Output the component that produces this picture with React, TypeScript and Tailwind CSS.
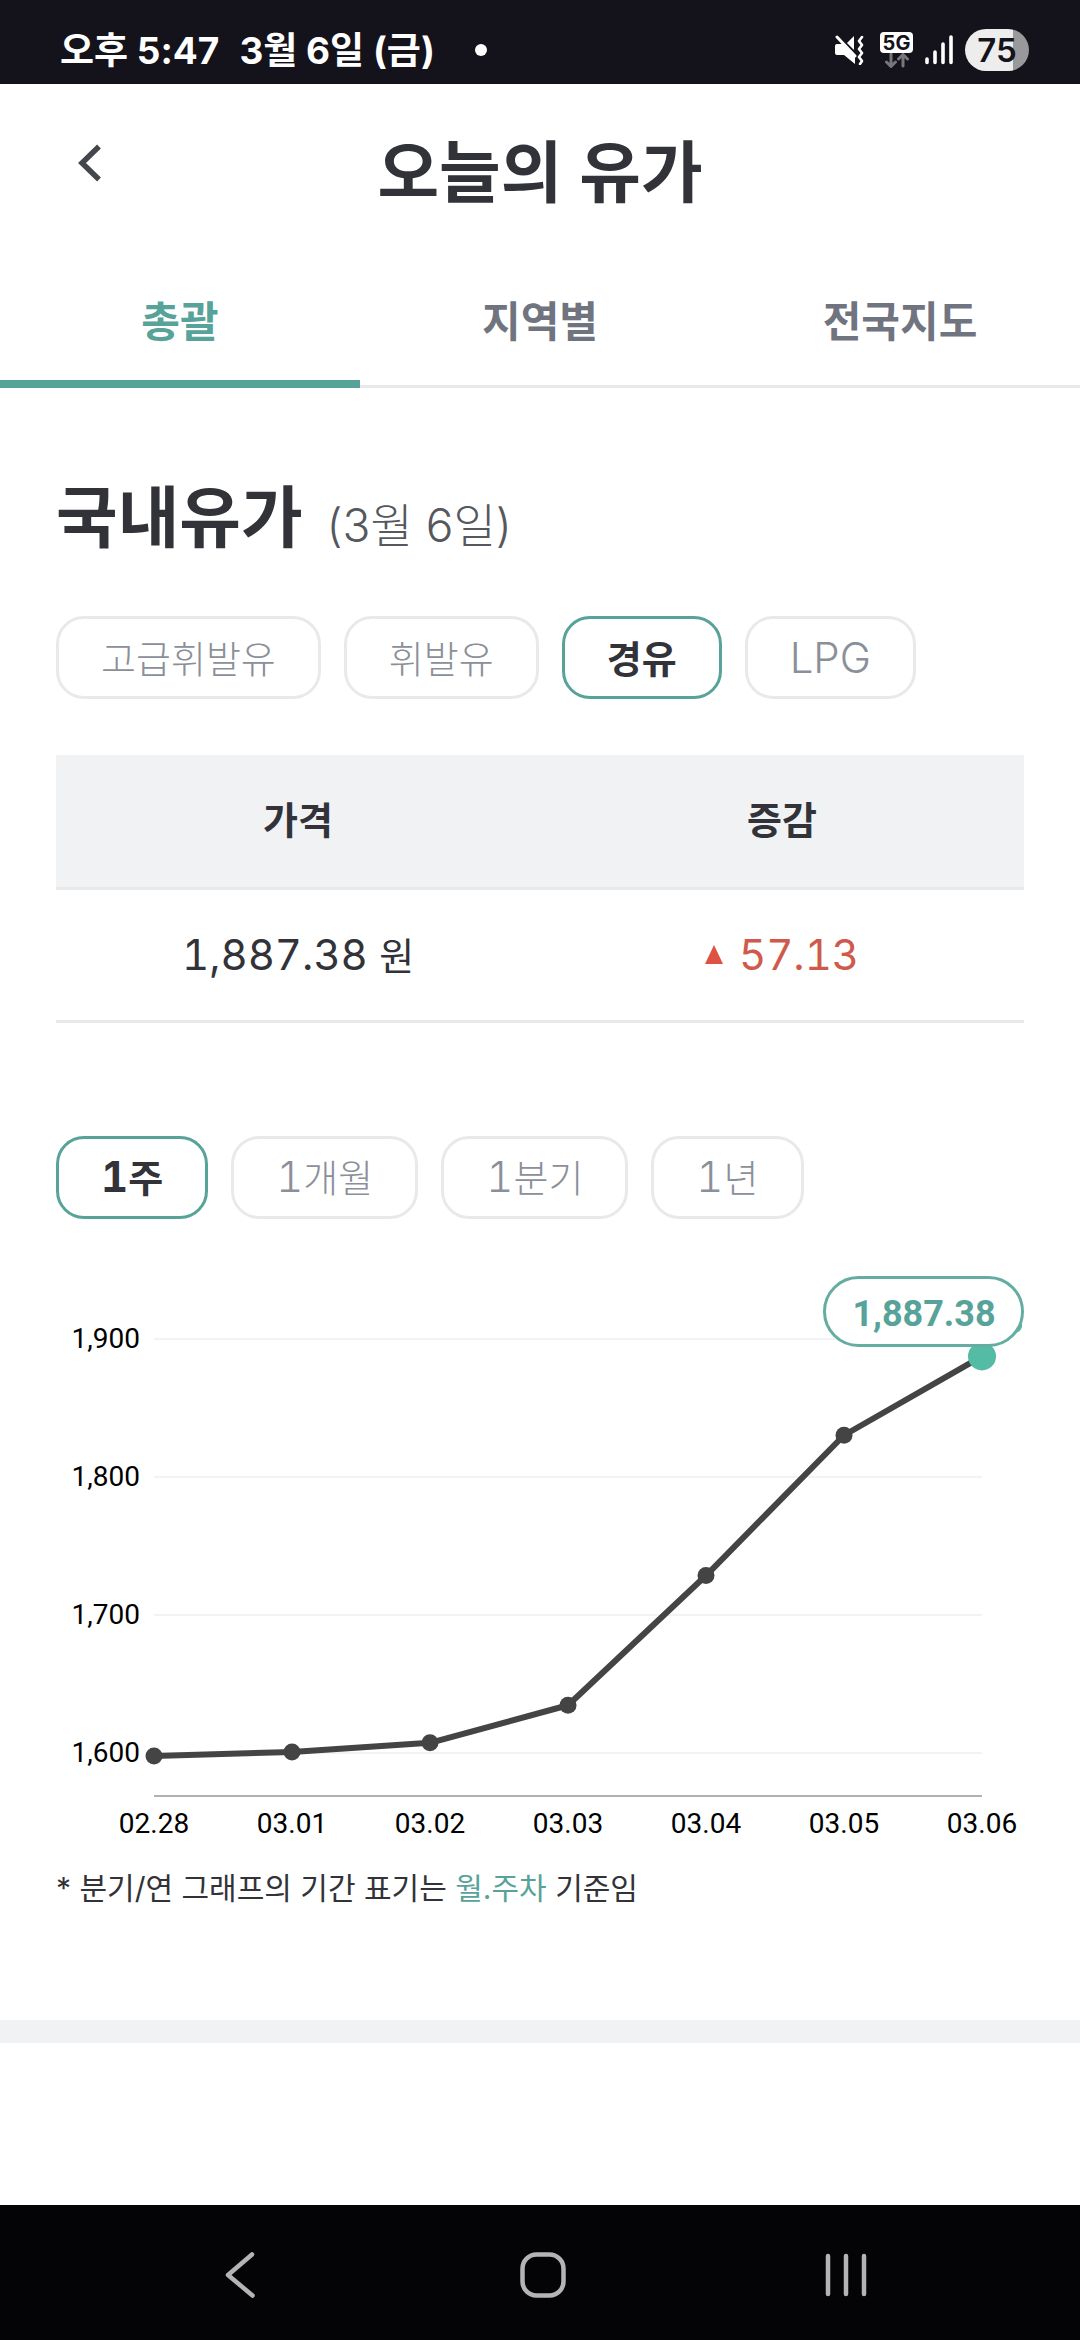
import { useState } from "react";

const FUELS = ["고급휘발유", "휘발유", "경유", "LPG"];
const PERIODS = ["1주", "1개월", "1분기", "1년"];
const TABS = ["총괄", "지역별", "전국지도"];

const PRICES = [
  { date: "02.28", price: 1597.9 },
  { date: "03.01", price: 1600.8 },
  { date: "03.02", price: 1607.4 },
  { date: "03.03", price: 1634.6 },
  { date: "03.04", price: 1728.6 },
  { date: "03.05", price: 1830.25 },
  { date: "03.06", price: 1887.38 },
];

function StatusBar() {
  return (
    <div className="flex h-[84px] items-center justify-between bg-[#14121a] pt-4 pr-[51px] pl-[60px] text-white">
      <div className="flex items-center text-[37px] leading-none font-bold">
        <span>오후 5:47</span>
        <span className="ml-5">3월 6일 (금)</span>
        <span className="ml-10 size-3 rounded-full bg-white" />
      </div>
      <div className="flex items-center gap-3">
        {/* muted + vibrate */}
        <svg className="mr-1" width="30" height="30" viewBox="0 0 30 30" fill="none">
          <path d="M1 11q0-2 2-2h6l12 12v8L10 20H3q-2 0-2-2z" fill="#fff" />
          <path d="M13 8l7-7v14z" fill="#fff" />
          <path d="M3 2l18 19" stroke="#fff" strokeWidth="3" strokeLinecap="round" />
          <path d="M28 2l-3 4 3 4-3 4 3 4-3 4 3 4-2 3" stroke="#fff" strokeWidth="2.6" strokeLinecap="round" strokeLinejoin="round" />
        </svg>
        <div className="flex w-[33px] flex-col items-center">
          <span className="flex h-[21px] w-full items-center justify-center rounded-[4px] bg-white text-[20px] leading-none font-bold text-[#14121a]">
            5G
          </span>
          <svg width="24" height="15" viewBox="0 0 24 15" fill="none" stroke="#77767b" strokeWidth="3" strokeLinecap="round" strokeLinejoin="round">
            <path d="M6 1v12M1.500 9L6 13.500L10.500 9M18 13V2M13.500 6L18 1.500L22.500 6" />
          </svg>
        </div>
        <svg width="28" height="30" viewBox="0 0 28 30" fill="none" stroke="#fff" strokeWidth="3.600" strokeLinecap="round">
          <path d="M2 24v3.500M10 17v10.500M18 9v18.500M26 2v25.500" />
        </svg>
        <div className="flex h-[42px] w-16 items-center justify-center rounded-full bg-linear-to-r from-[#ededee] from-75% to-[#99989b] to-75% text-[33px] leading-none font-semibold text-[#14121a]">
          75
        </div>
      </div>
    </div>
  );
}

type ChipsProps = { name: string; items: string[]; value: string; onChange: (v: string) => void };

function Chips({ name, items, value, onChange }: ChipsProps) {
  return (
    <div role="group" aria-label={name} className="flex flex-wrap gap-[23px]">
      {items.map((item) => {
        // latin letters and digits run a little larger than the hangul
        const latin = item.match(/^[A-Z0-9]+/)?.[0] ?? "";
        return (
          <button
            key={item}
            type="button"
            aria-pressed={item === value}
            onClick={() => onChange(item)}
            className={`flex h-[83px] items-center rounded-[28px] border-3 px-[42px] text-[38px] leading-none ${
              item === value ? "border-[#57a399] font-bold text-[#323338]" : "border-[#e8e9ea] font-light text-[#8b8f99]"
            }`}
          >
            <span>
              <span className="text-[42px] tabular-nums">{latin}</span>
              {item.slice(latin.length)}
            </span>
          </button>
        );
      })}
    </div>
  );
}

function PriceChart() {
  const x = (i: number) => 98 + i * 138;
  const y = (price: number) => 69 + (1900 - price) * 1.38;
  const last = PRICES.length - 1;

  return (
    <svg className="block w-full font-[Roboto,sans-serif]" viewBox="0 0 968 580" role="img" aria-label="경유 가격 그래프">
      {[1900, 1800, 1700, 1600].map((v) => (
        <g key={v}>
          <line x1={98} x2={926} y1={y(v)} y2={y(v)} stroke="#f2f3f4" strokeWidth="2" />
          <text x={84} y={y(v) + 9} textAnchor="end" fontSize="28" fill="#000">
            {v.toLocaleString("en-US")}
          </text>
        </g>
      ))}
      <line x1={98} x2={926} y1={526} y2={526} stroke="#b0b1b2" strokeWidth="2" />
      {PRICES.map((p, i) => (
        <text key={p.date} x={x(i)} y={563} textAnchor="middle" fontSize="28" fill="#000">
          {p.date}
        </text>
      ))}
      <polyline points={PRICES.map((p, i) => `${x(i)},${y(p.price)}`).join(" ")} fill="none" stroke="#444" strokeWidth="6" strokeLinejoin="round" />
      {PRICES.slice(0, last).map((p, i) => (
        <circle key={p.date} cx={x(i)} cy={y(p.price)} r="8.500" fill="#444" />
      ))}
      <circle cx={x(last)} cy={y(PRICES[last].price)} r="14" fill="#54bba5" />
      {/* latest price label */}
      <path d="M966 50v7q-2 6-8 6l-6-4z" fill="#54bba5" />
      <rect x="768.500" y="7.500" width="198" height="68" rx="34" fill="#fff" stroke="#65ada1" strokeWidth="3" />
      <text x="868" y="56" textAnchor="middle" fontSize="36" fontWeight="700" fill="#57a399">
        1,887.38
      </text>
    </svg>
  );
}

function NavBar() {
  return (
    <nav className="grid h-[135px] grid-cols-3 bg-[#040406] pt-1 pr-[82px] pl-[88px] text-[#b4b4b6]">
      <button type="button" aria-label="뒤로" className="flex items-center justify-center">
        <svg width="30" height="46" viewBox="0 0 30 46" fill="none" stroke="currentColor" strokeWidth="4.500" strokeLinecap="round" strokeLinejoin="round">
          <path d="M27 2.500L3 23l24.500 20.500" />
        </svg>
      </button>
      <button type="button" aria-label="홈" className="flex items-center justify-center">
        <svg width="46" height="46" viewBox="0 0 46 46" fill="none" stroke="currentColor" strokeWidth="4.500">
          <rect x="2.500" y="2.500" width="41" height="41" rx="14" />
        </svg>
      </button>
      <button type="button" aria-label="최근 앱" className="flex items-center justify-center">
        <svg width="42" height="44" viewBox="0 0 42 44" fill="none" stroke="currentColor" strokeWidth="4.500" strokeLinecap="round">
          <path d="M3 3v38M21 3v38M39 3v38" />
        </svg>
      </button>
    </nav>
  );
}

export default function App() {
  const [tab, setTab] = useState("총괄");
  const [fuel, setFuel] = useState("경유");
  const [period, setPeriod] = useState("1주");

  return (
    <div lang="ko" className="flex min-h-screen flex-col bg-white font-[Inter,'Noto_Sans_CJK_KR',sans-serif] text-[#323338]">
      <StatusBar />

      <header className="grid h-[172px] grid-cols-[1fr_auto_1fr] items-center px-[60px]">
        <button type="button" aria-label="이전" className="flex h-20 w-[60px] items-center justify-center justify-self-start pb-3.5">
          <svg width="24" height="38" viewBox="0 0 24 38" fill="none" stroke="#43464a" strokeWidth="5.500">
            <path d="M21 2.500L4 19l17 16.500" />
          </svg>
        </button>
        <h1 className="pt-1 text-[67px] leading-none font-semibold">오늘의 유가</h1>
      </header>

      <div role="tablist" className="grid h-[132px] grid-cols-3 border-b-3 border-[#e8e9ea]">
        {TABS.map((t) => (
          <button
            key={t}
            type="button"
            role="tab"
            aria-selected={t === tab}
            onClick={() => setTab(t)}
            className={`-mb-[3px] border-b-8 pt-2 text-[42px] leading-none font-bold ${
              t === tab ? "border-[#57a399] text-[#57a399]" : "border-transparent text-[#70747f]"
            }`}
          >
            {t}
          </button>
        ))}
      </div>

      <main className="flex-1">
        <section className="px-14 pt-[92px] pb-[110px]">
          <div className="flex items-baseline gap-6">
            <h2 className="text-[67px] leading-[76px] font-bold">국내유가</h2>
            <span className="text-[46px] leading-[60px] font-light text-[#55585d]">(3월 6일)</span>
          </div>

          <div className="mt-[60px]">
            <Chips name="유종" items={FUELS} value={fuel} onChange={setFuel} />
          </div>

          <table className="mt-14 w-full table-fixed text-center">
            <thead>
              <tr className="h-[133px] border-b-3 border-[#e8e9ea] bg-[#f1f2f4] text-[38px]">
                <th scope="col" className="font-semibold">가격</th>
                <th scope="col" className="font-semibold">증감</th>
              </tr>
            </thead>
            <tbody>
              <tr className="h-[133px] border-b-3 border-[#e8e9ea] text-[42px] tabular-nums">
                <td>
                  1,887.38 <span className="text-[38px]">원</span>
                </td>
                <td className="text-[#cf5a4b]">
                  <span className="flex items-center justify-center gap-4">
                    <svg width="18" height="19" viewBox="0 0 18 19" aria-label="상승">
                      <path d="M9 0l9 19H0z" fill="#dd5242" />
                    </svg>
                    57.13
                  </span>
                </td>
              </tr>
            </tbody>
          </table>

          <div className="mt-[113px] mb-[51px]">
            <Chips name="기간" items={PERIODS} value={period} onChange={setPeriod} />
          </div>

          <PriceChart />

          <p className="mt-4 text-[30px] leading-[44px]">
            * 분기/연 그래프의 기간 표기는 <span className="text-[#57a399]">월.주차</span> 기준임
          </p>
        </section>

        <div className="h-[23px] bg-[#f1f2f4]" />
      </main>

      <NavBar />
    </div>
  );
}
